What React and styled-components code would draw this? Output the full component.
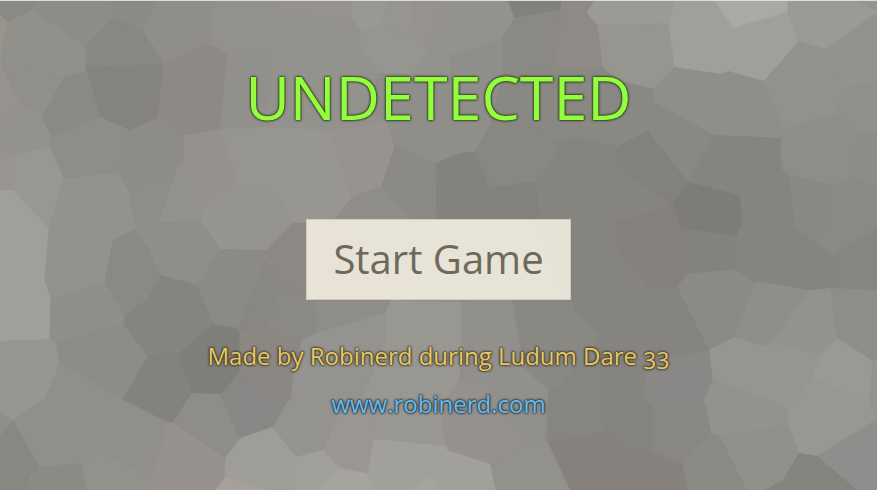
import styled, { createGlobalStyle } from 'styled-components';

const GlobalStyle = createGlobalStyle`
  body {
    margin: 0;
    background: #8f8e89;
  }
`

const Screen = styled.main`
  position: relative;
  box-sizing: border-box;
  min-height: 100vh;
  padding: 58px 16px 64px;
  display: flex;
  flex-direction: column;
  align-items: center;
  overflow: hidden;
  border-top: 1px solid #dcdcdc;
  font-family: Corbel, 'Open Sans', 'Noto Sans', sans-serif;
`

const Stones = styled.svg`
  position: absolute;
  inset: 0;
  width: 100%;
  height: 100%;
  opacity: 0.9;
  polygon {
    stroke-width: 1;
    stroke-linejoin: round;
  }
`

const Title = styled.h1`
  position: relative;
  margin: 0 0 84px;
  color: #93ff3c;
  font-size: 61px;
  font-weight: 400;
  line-height: 76px;
  text-shadow: 0 0 2px #2c3a1c, 0 0 2px #2c3a1c, 0 0 3px #2c3a1c;
`

const StartButton = styled.button`
  position: relative;
  margin: 0 0 40px;
  padding: 11px 26px 13px;
  border: 1px solid rgba(200, 196, 184, 0.8);
  background: rgba(247, 241, 228, 0.86);
  color: #6d6a5c;
  font-family: inherit;
  font-size: 40px;
  line-height: 55px;
  cursor: pointer;
`

const Credit = styled.p`
  position: relative;
  margin: 0 0 16px;
  color: #e8c865;
  font-size: 24px;
  line-height: 32px;
  font-variant-numeric: oldstyle-nums;
  text-shadow: 0 0 2px #3a3320, 0 0 2px #3a3320, 0 0 3px #3a3320;
`

const SiteLink = styled.a`
  position: relative;
  color: #69bbe8;
  font-size: 24px;
  line-height: 32px;
  text-decoration: none;
  text-shadow: 0 0 2px #1f3340, 0 0 2px #1f3340, 0 0 3px #1f3340;
`

// [fill, corners]
const stones = [
  ['#8a8984', '0,0 36,0 32,10 8,22 0,15'],
  ['#98968f', '0,15 8,22 0,55'],
  ['#8d8c87', '36,0 110,0 114,17 86,46 32,10'],
  ['#92918c', '32,10 8,22 1,56 64,77 85,72 87,67 86,46'],
  ['#8b8a85', '110,0 157,0 143,31 114,17'],
  ['#908f8a', '157,0 215,0 209,43 164,63 143,31'],
  ['#888782', '114,17 143,31 164,63 86,67 86,46'],
  ['#83827d', '86,67 163,64 158,118 129,130 101,117'],
  ['#8e8985', '164,63 209,43 228,52 220,129 184,135 158,118'],
  ['#93928d', '215,0 273,0 289,15 280,47 270,54 228,52 209,43'],
  ['#99938f', '273,0 352,0 352,17 289,15'],
  ['#94938e', '289,15 352,17 362,31 360,43 378,73 370,110 387,122 332,130 262,127 270,90 270,54 280,47'],
  ['#93918e', '228,52 270,54 270,90 262,127 220,129'],
  ['#91908b', '1,56 64,77 42,117 20,102'],
  ['#989390', '0,56 1,66 20,102 17,105 0,125'],
  ['#94938d', '20,102 42,117 52,136 49,146 16,156 0,150 0,125 17,105'],
  ['#8a8984', '64,77 85,72 101,117 52,136 42,117'],
  ['#8e8d88', '52,136 101,117 129,130 118,172 64,179 49,146'],
  ['#8d8c87', '129,130 158,118 184,135 184,160 177,170 128,190 118,172'],
  ['#8e8d88', '128,190 177,170 159,223 136,229'],
  ['#9b9591', '0,150 16,156 13,190 0,190'],
  ['#999892', '16,156 49,146 64,179 49,228 13,190'],
  ['#a2a19c', '0,190 13,190 49,228 45,280 51,298 50,339 0,341'],
  ['#94938e', '64,179 118,172 128,190 136,229 113,240 105,282 51,298 45,280 49,228'],
  ['#8a8984', '113,240 136,229 147,246 161,275 147,299 124,316 105,282'],
  ['#94938d', '184,160 177,170 159,223 200,220 209,199'],
  ['#98928f', '184,135 220,129 238,185 209,199 184,160'],
  ['#979691', '220,129 262,127 283,180 281,196 238,185'],
  ['#969590', '238,185 209,199 200,220 220,249 266,250 293,223 281,196'],
  ['#8f8e89', '159,223 200,220 220,249 197,285 161,275 147,246 136,229'],
  ['#989792', '262,127 332,130 332,137 352,197 335,218 293,223 281,196 283,180'],
  ['#9a9490', '332,130 387,122 395,145 382,186 352,197 332,137'],
  ['#9b9a95', '352,0 388,0 380,27 362,31 352,17'],
  ['#979691', '388,0 412,0 417,38 380,27'],
  ['#99938f', '412,0 443,0 429,50 417,38'],
  ['#979691', '362,31 380,27 417,38 428,50 412,73 378,73 360,43'],
  ['#94938e', '443,0 508,0 515,18 502,39 450,55 454,75 412,73 428,50'],
  ['#81817c', '508,0 562,0 562,9 515,18'],
  ['#8a8984', '515,18 562,9 556,70 555,75 503,75 502,39'],
  ['#908a86', '562,0 595,0 587,12 598,25 603,67 556,70'],
  ['#918f8c', '450,55 502,39 503,110 454,110'],
  ['#908f8c', '378,73 454,75 454,110 387,122 370,110'],
  ['#8f8e89', '387,122 454,105 503,110 475,152 460,153 436,163 395,145'],
  ['#8a8984', '395,145 436,163 437,218 412,218 382,186'],
  ['#8e8d88', '382,186 412,218 335,218 352,197'],
  ['#82817c', '436,163 460,153 475,152 491,188 479,218 437,218'],
  ['#888782', '490,125 540,125 557,141 555,158 537,181 491,188 475,152'],
  ['#898883', '503,75 556,70 603,67 616,80 653,88 653,103 648,131 617,146 577,137 557,141 540,125 490,125'],
  ['#81807b', '491,188 537,181 540,220 479,218'],
  ['#85847f', '557,141 577,137 617,146 616,165 672,205 615,222 617,250 577,288 560,280 540,220 537,181 555,158'],
  ['#9d9c97', '595,0 675,0 669,23 598,25 587,12'],
  ['#979691', '598,25 669,23 675,67 654,88 620,80 603,67'],
  ['#a2a19c', '675,0 715,0 733,27 788,11 799,41 764,81 728,71 720,74 675,67 669,23'],
  ['#adaca7', '715,0 788,0 788,11 733,27'],
  ['#9d9c97', '788,0 855,0 877,10 877,12 825,49 799,41 788,11'],
  ['#96958f', '855,0 877,0 877,9'],
  ['#94938e', '825,49 877,12 877,80 843,88 838,72'],
  ['#93928d', '799,41 825,49 838,72 843,88 836,114 784,129 764,81'],
  ['#8f8e89', '654,88 675,67 720,74 728,71 764,81 784,129 780,138 714,135 654,102'],
  ['#898883', '654,102 714,135 688,182 648,131'],
  ['#81807b', '617,146 648,131 688,182 672,205 616,165'],
  ['#84837e', '714,135 781,138 782,168 789,175 795,225 820,245 834,257 832,288 809,290 755,283 735,269 736,236 742,219 739,195 688,182'],
  ['#7c7b76', '688,182 739,195 742,219 736,236 682,228 672,205'],
  ['#8e8d87', '781,138 784,129 836,114 857,134 855,176 832,185 789,175 782,168'],
  ['#91908b', '836,114 843,88 877,80 877,132 857,134'],
  ['#8d8c87', '857,134 877,132 877,187 855,176'],
  ['#898883', '789,175 832,185 837,245 820,245 795,225'],
  ['#8a8986', '832,185 855,176 877,187 877,228 845,247 834,257 820,245'],
  ['#868580', '877,228 845,247 834,257 832,288 877,290'],
  ['#857f7b', '615,222 672,205 682,228 684,240 684,282 677,287 650,288 617,250'],
  ['#82817c', '736,236 682,228 684,280 687,274 735,269'],
  ['#8b8a85', '677,287 687,274 735,269 755,283 735,337 709,350'],
  ['#8f8e89', '735,337 755,283 762,282 809,290 771,343 762,346'],
  ['#94938e', '809,290 831,288 837,338 821,354 771,343'],
  ['#8e8d88', '831,288 877,290 877,360 873,361 837,338'],
  ['#979691', '709,350 735,337 762,346 771,343 821,354 812,378 788,408 712,378'],
  ['#94938e', '712,378 788,408 788,425 720,436 711,433 703,403'],
  ['#9c9b95', '812,378 821,354 837,338 873,361 869,402'],
  ['#9a9993', '812,378 869,402 877,418 817,456 799,453 788,425 788,408'],
  ['#959490', '873,361 877,360 877,418 869,402'],
  ['#918f8d', '817,456 877,419 877,490 857,490'],
  ['#92918c', '720,436 788,425 799,453 783,480 765,490 747,490'],
  ['#83827d', '799,453 817,456 857,490 765,490 783,480'],
  ['#8b8a85', '682,463 711,433 720,436 747,490 687,490'],
  ['#86807c', '547,441 605,431 628,456 653,451 682,463 687,490 570,490'],
  ['#83827c', '605,431 608,402 643,395 653,407 653,451 628,456'],
  ['#888782', '653,407 682,405 705,405 711,433 682,463 653,451'],
  ['#898886', '643,395 645,373 669,355 709,350 712,378 703,403 705,405 653,407'],
  ['#858480', '650,288 677,287 709,350 669,355 645,373 643,395 608,402 600,335 618,335'],
  ['#84837e', '577,288 617,250 650,288 618,335 600,335 577,314'],
  ['#868581', '547,441 548,390 560,385 600,335 608,402 605,431'],
  ['#898883', '512,300 571,299 577,314 600,335 560,385 548,390 523,367'],
  ['#85847f', '560,280 577,288 577,314 571,299'],
  ['#92918c', '461,302 512,300 523,367 548,390 543,439 547,441 523,443 495,409 460,370 460,330'],
  ['#999892', '389,300 461,302 461,330 459,381 444,420 446,446 373,439 364,393 385,340 385,312'],
  ['#979190', '445,400 459,381 483,385 495,409 523,443 490,464 446,450 443,425'],
  ['#93928d', '490,464 523,443 547,441 570,490 495,490'],
  ['#a4a39e', '373,439 446,446 447,450 490,464 495,490 373,490 367,473'],
  ['#9d9793', '338,415 365,393 373,439 367,473 339,468 323,449'],
  ['#a2a19c', '295,456 323,449 339,468 318,490 290,490'],
  ['#a8a7a2', '339,468 367,473 374,490 318,490'],
  ['#a8a7a2', '431,476 439,490 412,490'],
  ['#959490', '316,332 385,312 385,340 364,393 338,415 323,449 295,456 273,427 286,402 293,372 301,340'],
  ['#8e8d88', '315,300 390,300 385,312 316,332'],
  ['#8e8885', '266,250 293,223 340,222 370,250 395,290 389,300 315,300 300,295 282,283'],
  ['#8b8a85', '220,249 266,250 282,283 265,333 240,333 213,324 197,285'],
  ['#888782', '266,260 282,283 266,335 237,330'],
  ['#8a8984', '282,283 315,300 316,332 301,340 290,345 265,334'],
  ['#84837e', '161,275 197,285 213,324 177,352 147,356 123,322 124,316 147,299'],
  ['#7e7d78', '213,324 236,328 240,333 240,372 221,394 192,393 177,354'],
  ['#82817c', '147,356 177,352 192,393 173,422 169,423 122,399'],
  ['#8f8e89', '51,298 105,282 124,316 123,323 55,343 50,339'],
  ['#8d8c87', '55,343 123,323 147,356 122,399 60,363'],
  ['#989792', '0,341 50,339 55,343 59,363 46,397 13,420 0,412'],
  ['#91908b', '13,420 46,397 60,363 122,399 169,423 152,475 95,452 83,463 39,467'],
  ['#908f89', '0,412 13,420 0,436'],
  ['#888782', '0,436 13,420 39,467 30,477 27,490 0,490'],
  ['#8b8a85', '39,467 83,463 87,490 27,490'],
  ['#93928d', '83,463 95,452 152,475 155,490 87,490'],
  ['#979190', '173,422 226,457 228,477 215,490 155,490 152,475 168,423'],
  ['#8e8d88', '173,422 192,393 221,394 240,438 226,457'],
  ['#8d8783', '240,335 265,333 301,340 293,372 290,399 240,372'],
  ['#888785', '221,394 240,372 290,399 286,402 272,427 240,438'],
  ['#a09f9a', '240,438 272,427 295,456 295,490 270,490 225,477 226,457'],
  ['#a8a29f', '215,490 225,477 270,490'],
]

const App = () => {
  return (
    <>
      <GlobalStyle />
      <Screen>
        <Stones viewBox='0 0 877 490' preserveAspectRatio='xMidYMid slice' aria-hidden='true'>
          { stones.map(([fill, points]) => (
            <polygon key={points} points={points} fill={fill} stroke={fill} />
          ))}
        </Stones>
        <Title>UNDETECTED</Title>
        <StartButton type='button'>Start Game</StartButton>
        <Credit>Made by Robinerd during Ludum Dare 33</Credit>
        <SiteLink href='http://www.robinerd.com'>www.robinerd.com</SiteLink>
      </Screen>
    </>
  )
}

export default App
